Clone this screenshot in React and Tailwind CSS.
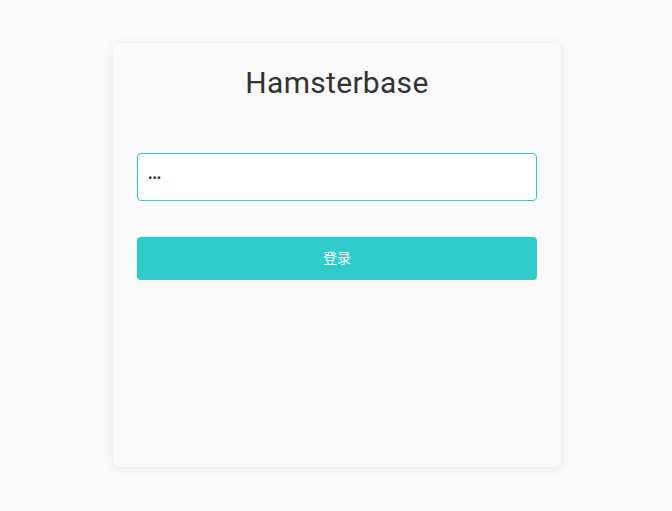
import React, { useState } from 'react'

export default function App() {
  const [pwd, setPwd] = useState('abc')

  return (
    <div className="min-h-screen w-full bg-[#fafafa] pl-[2px] pt-[43px]" style={{ fontFamily: 'Roboto, "Noto Sans CJK SC", sans-serif' }}>
      <div className="mx-auto flex h-[424px] w-[448px] flex-col rounded-md bg-[#fafafa] px-6 shadow-[0_1px_10px_rgba(0,0,0,0.08)]">
        <h1 className="mt-[20px] text-center text-[30px] font-normal leading-[40px] tracking-[0.3px] text-[#333]">Hamsterbase</h1>
        <input
          type="password"
          value={pwd}
          onChange={e => setPwd(e.target.value)}
          className="mt-[50px] h-[48px] w-full rounded-[4px] border border-[#2ecccc] bg-white px-[10px] text-[13px] text-[#333] outline-none"
        />
        <button className="mt-[36px] h-[43px] w-full rounded-[4px] bg-[#30cccc] text-[14px] text-white">登录</button>
      </div>
    </div>
  )
}
